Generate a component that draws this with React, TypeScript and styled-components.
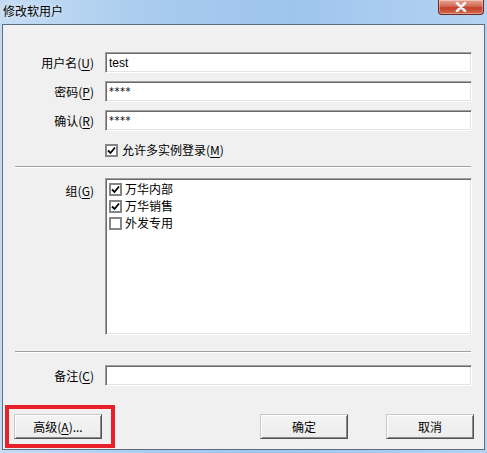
import { FC } from 'react';
import styled, { createGlobalStyle } from 'styled-components';

const GlobalStyle = createGlobalStyle`
  html, body {
    margin: 0;
    padding: 0;
    background: #a9cbef;
  }
  * {
    box-sizing: border-box;
  }
`;

const Window = styled.div`
  width: 487px;
  height: 453px;
  display: flex;
  flex-direction: column;
  background: linear-gradient(90deg, #c4dcf3 0%, #a6c9ee 35%, #9fc5ee 60%, #b4d2f1 100%);
  font-family: 'Noto Sans CJK SC', 'Liberation Sans', sans-serif;
  font-size: 12px;
  color: #000;
`;

const TitleBar = styled.div`
  height: 24px;
  display: flex;
  align-items: flex-start;
  padding-left: 3px;
`;

const Title = styled.span`
  margin-top: 3px;
  font-size: 12px;
  line-height: 16px;
  color: #000;
  text-shadow: 0 0 6px rgba(255, 255, 255, 0.9);
`;

const CloseButton = styled.div`
  margin-left: auto;
  margin-right: 3px;
  width: 46px;
  height: 15px;
  border: 1px solid #6b2a22;
  border-top: none;
  border-radius: 0 0 4px 4px;
  background: linear-gradient(180deg, #e8a593 0%, #d26a54 45%, #c1402a 55%, #d46a4f 100%);
  display: flex;
  align-items: center;
  justify-content: center;
  box-shadow: inset 0 0 0 1px rgba(255, 255, 255, 0.35);
`;

const Client = styled.div`
  flex: 1;
  margin: 0 2px 3px 2px;
  border: 1px solid #5d6d82;
  background: #f0f0f0;
  display: flex;
  flex-direction: column;
`;

const FieldRow = styled.div<{ $top: number }>`
  display: grid;
  grid-template-columns: 91px 1fr;
  column-gap: 11px;
  padding-right: 12px;
  margin-top: ${({ $top }) => $top}px;
  align-items: center;
`;

const TopRow = styled(FieldRow)`
  align-items: start;
`;

const Label = styled.label<{ $pad?: number }>`
  text-align: right;
  white-space: nowrap;
  line-height: 16px;
  padding-top: ${({ $pad }) => $pad ?? 0}px;
`;

const Key = styled.span`
  text-decoration: underline;
  text-underline-offset: 2px;
`;

const TextBox = styled.div`
  height: 21px;
  background: #fff;
  border-top: 1px solid #a0a0a0;
  border-left: 1px solid #a0a0a0;
  border-right: 1px solid #fff;
  border-bottom: 1px solid #fff;
  box-shadow: inset 1px 1px 0 #696969, inset -1px -1px 0 #e3e3e3;
  padding: 2px 0 0 3px;
  font-family: 'Liberation Sans', 'DejaVu Sans', sans-serif;
  font-size: 12px;
  line-height: 16px;
`;

const Secret = styled.span`
  font-family: 'DejaVu Sans', sans-serif;
  font-size: 10px;
  letter-spacing: 0.5px;
  position: relative;
  top: -1px;
`;

const Box = styled.span`
  width: 13px;
  height: 13px;
  flex: none;
  background: #fff;
  border: 2px solid #858585;
  display: flex;
  align-items: center;
  justify-content: center;
`;

const CheckLine = styled.div`
  display: flex;
  align-items: center;
  gap: 4px;
  line-height: 16px;
`;

const Divider = styled.div<{ $top: number }>`
  margin: ${({ $top }) => $top}px 13px 0 12px;
  height: 2px;
  border-top: 1px solid #a0a0a0;
  border-bottom: 1px solid #fff;
`;

const ListBox = styled(TextBox)`
  height: 157px;
  padding: 2px 0 0 3px;
  display: flex;
  flex-direction: column;
  gap: 1px;
  font-family: 'Noto Sans CJK SC', sans-serif;
`;

const ListItem = styled(CheckLine)`
  gap: 3px;
  line-height: 16px;
`;

const ButtonBar = styled.div`
  margin-top: auto;
  margin-bottom: 1px;
  display: flex;
  align-items: center;
  padding: 0 10px 0 2px;
`;

const Highlight = styled.div`
  border: 4px solid #e8202a;
  padding: 5px 9px 5px 5px;
  margin-right: auto;
`;

const Button = styled.button`
  width: 88px;
  height: 25px;
  background: linear-gradient(180deg, #f4f4f4 0%, #ececec 100%);
  border-top: 1px solid #c8c8c8;
  border-left: 1px solid #c8c8c8;
  border-right: 1px solid #505050;
  border-bottom: 1px solid #505050;
  box-shadow: inset 1px 1px 0 #fff, inset -1px -1px 0 #8a8a8a;
  font-family: 'Noto Sans CJK SC', sans-serif;
  font-size: 12px;
  color: #000;
  padding: 0;
  line-height: 20px;
`;

const OkButton = styled(Button)`
  margin-right: 38px;
`;

const Check: FC = () => (
  <svg width="9" height="9" viewBox="0 0 9 9">
    <path d="M1 4.5 L3.5 7 L8 1.5" stroke="#000" strokeWidth="1.8" fill="none" />
  </svg>
);

const CheckBox: FC<{ checked?: boolean }> = ({ checked }) => <Box>{checked && <Check />}</Box>;

const groups = [
  { name: '万华内部', checked: true },
  { name: '万华销售', checked: true },
  { name: '外发专用', checked: false },
];

const App: FC = () => {
  return (
    <>
      <GlobalStyle />
      <Window>
        <TitleBar>
          <Title>修改软用户</Title>
          <CloseButton>
            <svg width="12" height="10" viewBox="0 0 12 10">
              <path d="M2 1 L10 9 M10 1 L2 9" stroke="#fff" strokeWidth="2.6" strokeLinecap="round" />
              <path d="M2 1 L10 9 M10 1 L2 9" stroke="#e9e9f0" strokeWidth="1.4" strokeLinecap="round" />
            </svg>
          </CloseButton>
        </TitleBar>
        <Client>
          <FieldRow $top={27}>
            <Label>
              用户名(<Key>U</Key>)
            </Label>
            <TextBox>test</TextBox>
          </FieldRow>
          <FieldRow $top={8}>
            <Label>
              密码(<Key>P</Key>)
            </Label>
            <TextBox>
              <Secret>****</Secret>
            </TextBox>
          </FieldRow>
          <FieldRow $top={8}>
            <Label>
              确认(<Key>R</Key>)
            </Label>
            <TextBox>
              <Secret>****</Secret>
            </TextBox>
          </FieldRow>
          <FieldRow $top={11}>
            <span />
            <CheckLine>
              <CheckBox checked />
              <span>
                允许多实例登录(<Key>M</Key>)
              </span>
            </CheckLine>
          </FieldRow>
          <Divider $top={8} />
          <TopRow $top={10}>
            <Label $pad={5}>
              组(<Key>G</Key>)
            </Label>
            <ListBox>
              {groups.map((g) => (
                <ListItem key={g.name}>
                  <CheckBox checked={g.checked} />
                  <span>{g.name}</span>
                </ListItem>
              ))}
            </ListBox>
          </TopRow>
          <Divider $top={16} />
          <FieldRow $top={12}>
            <Label>
              备注(<Key>C</Key>)
            </Label>
            <TextBox />
          </FieldRow>
          <ButtonBar>
            <Highlight>
              <Button>
                高级(<Key>A</Key>)...
              </Button>
            </Highlight>
            <OkButton>确定</OkButton>
            <Button>取消</Button>
          </ButtonBar>
        </Client>
      </Window>
    </>
  );
};

export default App;
